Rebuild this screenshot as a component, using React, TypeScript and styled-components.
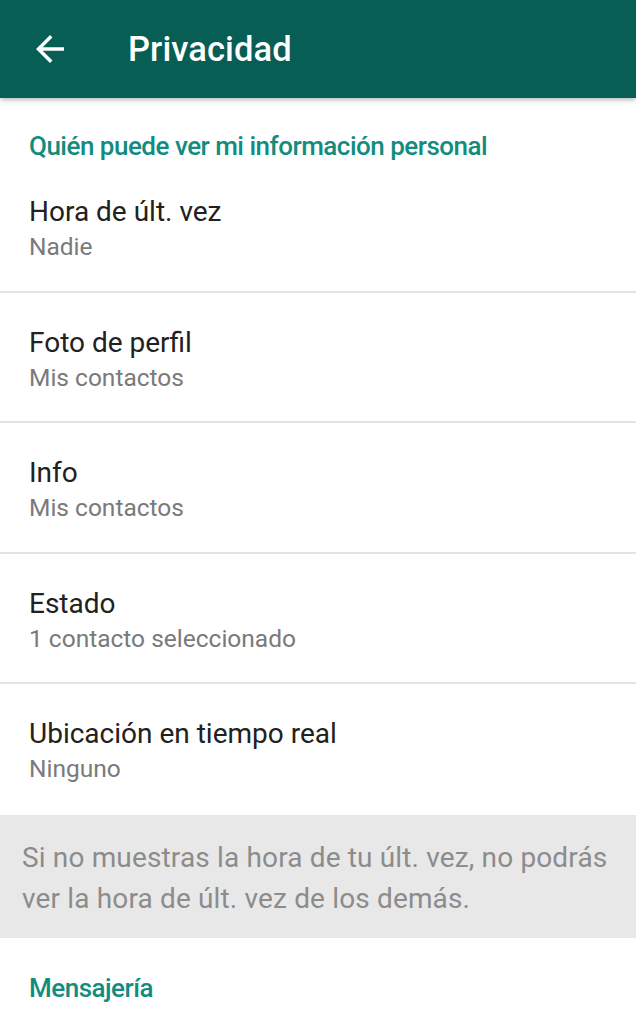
import React from "react";
import styled, { createGlobalStyle } from "styled-components";

const Global = createGlobalStyle`
  html, body { margin: 0; padding: 0; background: #ffffff; }
  body { font-family: Roboto, "Noto Sans", Arial, sans-serif; -webkit-font-smoothing: antialiased; }
  * { box-sizing: border-box; }
`;

const Page = styled.div`
  width: 636px;
  min-height: 1024px;
  background: #ffffff;
  display: flex;
  flex-direction: column;
`;

const AppBar = styled.header`
  height: 98px;
  flex-shrink: 0;
  background: #075e54;
  display: flex;
  align-items: center;
  padding-left: 29px;
  gap: 57px;
  box-shadow: 0 2px 5px rgba(0, 0, 0, 0.28);
  position: relative;
  z-index: 1;
`;

const BackButton = styled.button`
  width: 42px;
  height: 42px;
  padding: 0;
  border: 0;
  background: transparent;
  display: flex;
  align-items: center;
  justify-content: center;
`;

const Title = styled.h1`
  margin: 0;
  color: #ffffff;
  font-size: 34.5px;
  font-weight: 500;
  letter-spacing: 0.1px;
`;

const SectionTitle = styled.h2<{ $top: number; $bottom: number }>`
  margin: 0;
  padding: ${(p) => p.$top}px 29px ${(p) => p.$bottom}px;
  color: #128c7e;
  font-size: 26px;
  font-weight: 500;
  letter-spacing: -0.5px;
  line-height: 32px;
`;

const Row = styled.div<{ $divider: boolean }>`
  height: 130.5px;
  flex-shrink: 0;
  padding: 33px 29px 0;
  display: flex;
  flex-direction: column;
  border-bottom: ${(p) => (p.$divider ? "2px solid #e3e3e3" : "none")};
`;

const RowTitle = styled.div`
  color: #212121;
  font-size: 28px;
  line-height: 34px;
`;

const RowValue = styled.div`
  color: #7a7a7a;
  font-size: 24.5px;
  line-height: 30px;
  margin-top: 3px;
`;

const Note = styled.div`
  background: #e8e8e8;
  padding: 22.5px 14px 18.5px 22px;
  color: #8c8c8c;
  font-size: 28px;
  line-height: 41px;
  letter-spacing: 0.15px;
`;

const rows = [
  { title: "Hora de últ. vez", value: "Nadie" },
  { title: "Foto de perfil", value: "Mis contactos" },
  { title: "Info", value: "Mis contactos" },
  { title: "Estado", value: "1 contacto seleccionado" },
  { title: "Ubicación en tiempo real", value: "Ninguno" },
];

export default function App() {
  return (
    <Page>
      <Global />
      <AppBar>
        <BackButton aria-label="Atrás">
          <svg width="42" height="42" viewBox="0 0 24 24" fill="#ffffff">
            <path d="M20 11H7.83l5.59-5.59L12 4l-8 8 8 8 1.41-1.41L7.83 13H20v-2z" />
          </svg>
        </BackButton>
        <Title>Privacidad</Title>
      </AppBar>
      <SectionTitle $top={32} $bottom={0}>Quién puede ver mi información personal</SectionTitle>
      {rows.map((r, i) => (
        <Row key={r.title} $divider={i < rows.length - 1}>
          <RowTitle>{r.title}</RowTitle>
          <RowValue>{r.value}</RowValue>
        </Row>
      ))}
      <Note>
        Si no muestras la hora de tu últ. vez, no podrás ver la hora de últ. vez de los demás.
      </Note>
      <SectionTitle $top={34} $bottom={20}>Mensajería</SectionTitle>
    </Page>
  );
}
